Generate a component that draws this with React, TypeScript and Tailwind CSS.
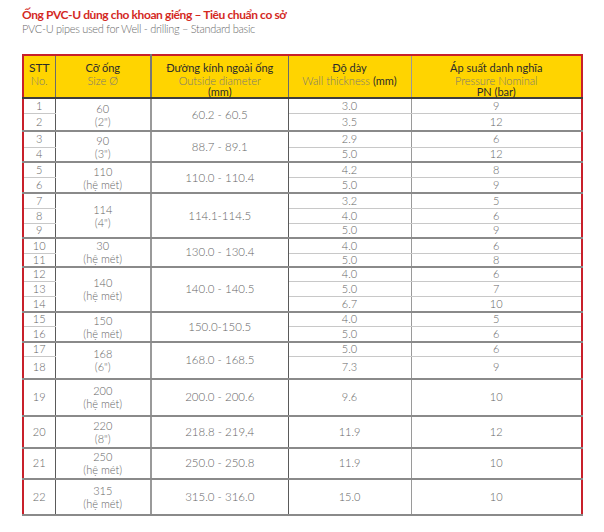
import React from 'react';

interface Group {
  stt: number[];
  size: string;
  sub: string;
  od: string;
  wall: string[];
  pn: string[];
  heights: number[];
}

const GROUPS: Group[] = [
  { stt: [1, 2], size: '60', sub: '(2")', od: '60.2 - 60.5', wall: ['3.0', '3.5'], pn: ['9', '12'], heights: [15, 18] },
  { stt: [3, 4], size: '90', sub: '(3")', od: '88.7 - 89.1', wall: ['2.9', '5.0'], pn: ['6', '12'], heights: [16, 15] },
  { stt: [5, 6], size: '110', sub: '(hệ mét)', od: '110.0 - 110.4', wall: ['4.2', '5.0'], pn: ['8', '9'], heights: [15, 16] },
  { stt: [7, 8, 9], size: '114', sub: '(4")', od: '114.1-114.5', wall: ['3.2', '4.0', '5.0'], pn: ['5', '6', '9'], heights: [15, 15, 15] },
  { stt: [10, 11], size: '30', sub: '(hệ mét)', od: '130.0 - 130.4', wall: ['4.0', '5.0'], pn: ['6', '8'], heights: [15, 13] },
  { stt: [12, 13, 14], size: '140', sub: '(hệ mét)', od: '140.0 - 140.5', wall: ['4.0', '5.0', '6.7'], pn: ['6', '7', '10'], heights: [15, 15, 15] },
  { stt: [15, 16], size: '150', sub: '(hệ mét)', od: '150.0-150.5', wall: ['4.0', '5.0'], pn: ['5', '6'], heights: [15, 15] },
  { stt: [17, 18], size: '168', sub: '(6")', od: '168.0 - 168.5', wall: ['5.0', '7.3'], pn: ['6', '9'], heights: [15, 22] },
  { stt: [19], size: '200', sub: '(hệ mét)', od: '200.0 - 200.6', wall: ['9.6'], pn: ['10'], heights: [37] },
  { stt: [20], size: '220', sub: '(8")', od: '218.8 - 219,4', wall: ['11.9'], pn: ['12'], heights: [32] },
  { stt: [21], size: '250', sub: '(hệ mét)', od: '250.0 - 250.8', wall: ['11.9'], pn: ['10'], heights: [31] },
  { stt: [22], size: '315', sub: '(hệ mét)', od: '315.0 - 316.0', wall: ['15.0'], pn: ['10'], heights: [36] },
];

export default function App() {
  return (
    <div className="w-[604px] h-[532px] bg-white pl-[22px] pt-[7px] text-[#666]" style={{ fontFamily: 'Lato, "Noto Sans", sans-serif' }}>
      <h1 className="text-[12px] font-bold leading-[15px] text-[#d42a1f] tracking-[-0.4px]">
        Ống PVC-U dùng cho khoan giếng – Tiêu chuẩn co sở
      </h1>
      <p className="text-[11px] font-light leading-[14px] text-[#6b6b6b] tracking-[-0.3px]">
        PVC-U pipes used for Well - drilling – Standard basic
      </p>

      <table className="mt-[18px] w-[559px] table-fixed border-collapse border-2 border-[#c8202a] text-[11px] font-light text-center">
        <colgroup>
          <col className="w-[32px]" />
          <col className="w-[96px]" />
          <col className="w-[137px]" />
          <col className="w-[123px]" />
          <col className="w-[171px]" />
        </colgroup>
        <thead>
          <tr className="h-[43px] bg-[#ffd400] leading-[12.5px]">
            <th className="align-top pt-[6px] border-r border-[#6b6b6b] border-b-2 border-b-[#3d3d3d] font-normal">
              <div className="text-[#2b2b2b] text-[12px]">STT</div>
              <div className="text-[#777] font-light">No.</div>
            </th>
            <th className="align-top pt-[6px] border-r-2 border-[#777] border-b-2 border-b-[#3d3d3d] font-normal">
              <div className="text-[#2b2b2b]">Cỡ ống</div>
              <div className="text-[#777] font-light">Size Ø</div>
            </th>
            <th className="align-top pt-[6px] border-r border-[#6b6b6b] border-b-2 border-b-[#3d3d3d] font-normal">
              <div className="text-[#2b2b2b]">Đường kính ngoài ống</div>
              <div className="text-[#777] font-light">Outside diameter</div>
              <div className="text-[#2b2b2b] leading-[10px]">(mm)</div>
            </th>
            <th className="align-top pt-[6px] border-r border-[#999] border-b-2 border-b-[#3d3d3d] font-normal">
              <div className="text-[#2b2b2b]">Độ dày</div>
              <div className="text-[#777] font-light">
                Wall thickness <span className="text-[#2b2b2b] font-normal">(mm)</span>
              </div>
            </th>
            <th className="align-top pt-[6px] border-b-2 border-b-[#3d3d3d] font-normal">
              <div className="text-[#2b2b2b]">Áp suất danh nghĩa</div>
              <div className="text-[#777] font-light">Pressure Nominal</div>
              <div className="text-[#2b2b2b] leading-[10px]">PN (bar)</div>
            </th>
          </tr>
        </thead>
        <tbody>
          {GROUPS.map((g) =>
            g.stt.map((n, i) => {
              const last = i === g.stt.length - 1;
              const rowLine = last ? 'border-b-2 border-b-[#8a8a8a]' : 'border-b border-b-[#c8c8c8]';
              return (
                <tr key={n} style={{ height: g.heights[i] }} className="leading-[12px]">
                  <td className={`p-0 border-r border-r-[#5a5a5a] ${rowLine}`}>{n}</td>
                  {i === 0 && (
                    <>
                      <td
                        rowSpan={g.stt.length}
                        className="p-0 border-r-2 border-r-[#9a9a9a] border-b-2 border-b-[#8a8a8a] leading-[13px]"
                      >
                        <div>{g.size}</div>
                        <div>{g.sub}</div>
                      </td>
                      <td
                        rowSpan={g.stt.length}
                        className="p-0 border-r border-r-[#5a5a5a] border-b-2 border-b-[#8a8a8a] text-[11.5px]"
                      >
                        {g.od}
                      </td>
                    </>
                  )}
                  <td className={`p-0 border-r border-r-[#9a9a9a] ${rowLine}`}>{g.wall[i]}</td>
                  <td className={`p-0 ${rowLine}`}>{g.pn[i]}</td>
                </tr>
              );
            })
          )}
        </tbody>
      </table>
    </div>
  );
}
